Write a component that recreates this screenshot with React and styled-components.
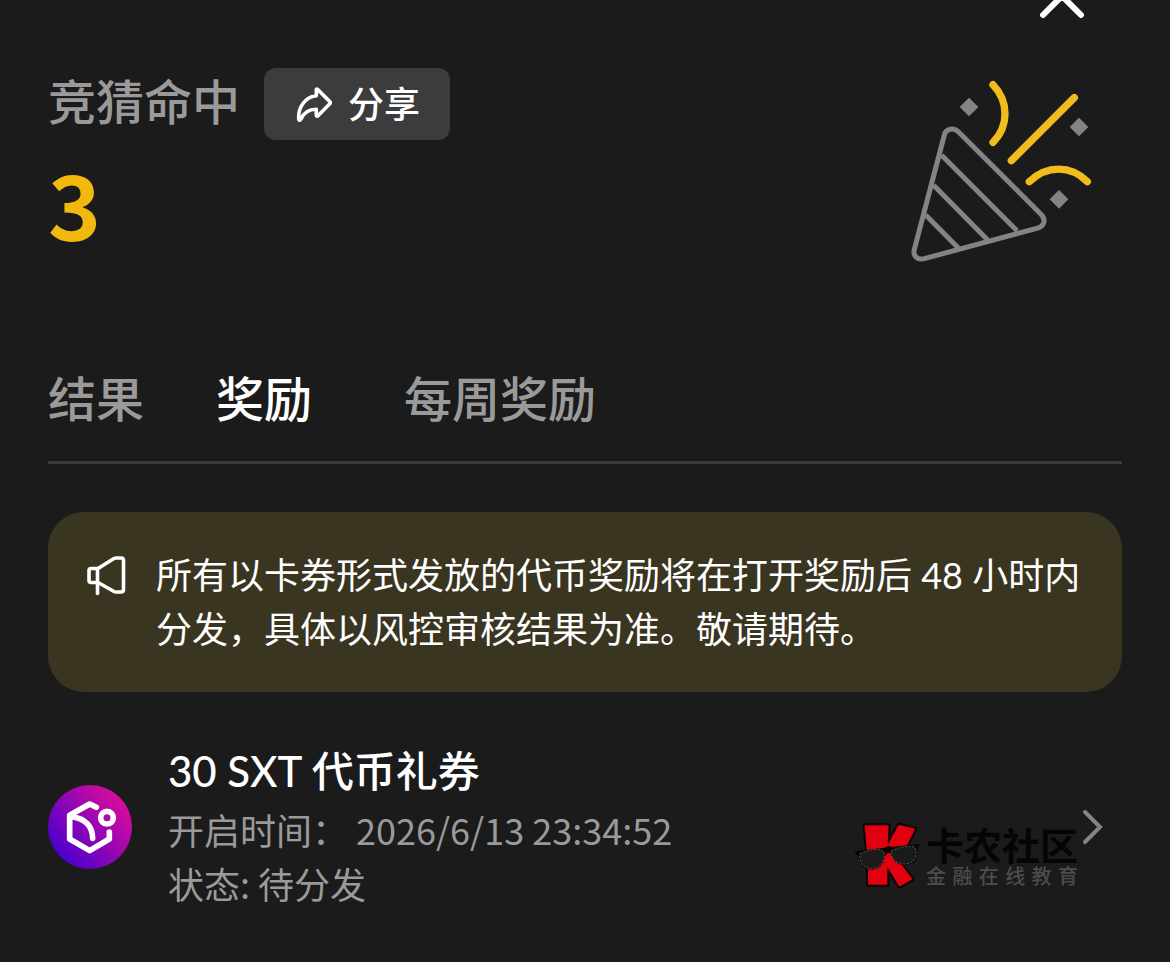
import { useState } from "react";
import styled, { createGlobalStyle } from "styled-components";

const GlobalStyle = createGlobalStyle`
  * {
    box-sizing: border-box;
  }
  body {
    margin: 0;
    background: #1b1b1b;
    color: #fff;
    font-family: Lato, "Noto Sans CJK SC", sans-serif;
  }
  button {
    font-family: inherit;
    border: none;
    background: none;
    padding: 0;
    cursor: pointer;
  }
  svg {
    display: block;
    flex-shrink: 0;
  }
`;

const Sheet = styled.main`
  overflow: hidden;
`;

// The close button is half scrolled out of the top of the sheet
const TopBar = styled.div`
  display: flex;
  justify-content: flex-end;
  align-items: flex-end;
  height: 20px;
  padding: 0 84px;
  overflow: hidden;
`;

const Body = styled.div`
  padding: 48px;
`;

const Hero = styled.section`
  display: flex;
  justify-content: space-between;
  align-items: flex-start;
  padding-right: 24px;
`;

const HeroTitle = styled.div`
  display: flex;
  align-items: flex-start;
  gap: 24px;
  height: 72px;
`;

const Heading = styled.h1`
  margin: 0;
  font-size: 48px;
  line-height: 68px;
  font-weight: 500;
  color: #9a9a9a;
`;

const ShareButton = styled.button`
  display: flex;
  align-items: center;
  gap: 16px;
  height: 72px;
  padding: 0 30px 0 32px;
  border-radius: 12px;
  background: #3c3c3c;
  color: #fff;
  font-size: 36px;
  line-height: 54px;
  font-weight: 500;
`;

const HitCount = styled.p`
  margin: 8px 0 0;
  font-family: "Noto Sans CJK SC", sans-serif;
  font-size: 90px;
  line-height: 108px;
  font-weight: 700;
  color: #f0b90b;
`;

const Tabs = styled.nav`
  display: flex;
  gap: 72px;
  margin-top: 96px;
  padding-bottom: 27px;
  border-bottom: 3px solid #3a3a3a;
`;

const Tab = styled.button`
  margin-right: ${({ $active }) => ($active ? "20px" : "0")};
  font-size: 48px;
  line-height: 70px;
  font-weight: 500;
  color: ${({ $active }) => ($active ? "#fff" : "#9a9a9a")};
`;

const Notice = styled.section`
  display: flex;
  gap: 28px;
  margin-top: 48px;
  padding: 36px;
  border-radius: 36px;
  background: #3a3520;
`;

const NoticeIcon = styled.div`
  padding-top: 6px;
`;

const NoticeText = styled.p`
  margin: 0;
  font-size: 36px;
  line-height: 54px;
`;

const Reward = styled.article`
  position: relative;
  display: flex;
  align-items: center;
  margin-top: 48px;
  padding-right: 18px;
`;

const RewardInfo = styled.div`
  flex: 1;
  margin-left: 36px;
  padding-bottom: 4px;
`;

const RewardTitle = styled.h2`
  margin: 0;
  font-size: 42px;
  line-height: 62px;
  font-weight: 500;
`;

const RewardMeta = styled.p`
  margin: 0;
  font-family: "Noto Sans CJK SC", sans-serif;
  font-size: 36px;
  line-height: 54px;
  color: #9a9a9a;
`;

const Watermark = styled.div`
  position: absolute;
  right: 44px;
  bottom: 24px;
  display: flex;
  align-items: center;
  gap: 6px;
  pointer-events: none;
`;

const WatermarkName = styled.div`
  font-size: 38px;
  line-height: 40px;
  font-weight: 700;
  color: #050505;
`;

const WatermarkTag = styled.div`
  display: flex;
  justify-content: space-between;
  font-size: 20px;
  line-height: 22px;
  font-weight: 500;
  color: #4c4c4c;
`;

const CloseIcon = () => (
  <svg width="48" height="48" viewBox="0 0 48 48" fill="none" stroke="#fff" strokeWidth="6" strokeLinecap="round">
    <path d="M5 5l38 38M43 5L5 43" />
  </svg>
);

const ShareIcon = () => (
  <svg width="36" height="36" viewBox="0 0 36 36" fill="none" stroke="#fff" strokeWidth="3.6" strokeLinejoin="round">
    <path d="M21.500 3.200L34.800 16.700L21.500 30.200Q20.300 30.500 20.300 29V23.300C13 23.200 8 26.500 5 33Q3.600 35.200 2.800 33.500C1.500 21.500 9.500 10.800 20.300 9.800V4Q20.500 2.600 21.500 3.200Z" />
  </svg>
);

const PopperIcon = () => (
  <svg width="200" height="200" viewBox="24 24 600 600" fill="none" strokeLinecap="round">
    <g stroke="#848484" strokeWidth="15" strokeLinejoin="round">
      <path d="M163 225C168 205 191 202 205 215L453 463C469 480 463 500 440 505L103 596C82 601 68 588 73 568Z" />
      <path d="M155 286L381 512M131 376L293 540M107 465L205 564" strokeLinecap="butt" />
    </g>
    <path d="M237 113l28 28-28 28-28-28zM567 173l28 28-28 28-28-28zM507 390l28 28-28 28-28-28z" fill="#848484" />
    <path d="M309 74C357 124 357 198 309 247M364 302L553 113M418 365C470 315 542 315 592 365" stroke="#f0bd1c" strokeWidth="22" />
  </svg>
);

const MegaphoneIcon = () => (
  <svg width="44" height="44" viewBox="0 0 44 44" fill="none" stroke="#fff" strokeWidth="3.6" strokeLinecap="round" strokeLinejoin="round">
    <path d="M14 14.500L30 4.500Q31 4 32 4H37Q39.500 4 39.500 6.500V35.500Q39.500 38 37 38H32Q31 38 30 37.500L14 28.500" />
    <path d="M13.500 14.500H7Q5 14.500 5 16.500V26.500Q5 28.500 7 28.500H13.500M13.500 14.500V39.500" />
  </svg>
);

const TokenIcon = () => (
  <svg width="84" height="84" viewBox="54 44 252 252" fill="none">
    <defs>
      <linearGradient id="token" x1="0.15" y1="0.85" x2="0.9" y2="0.2">
        <stop offset="0" stopColor="#4b00cc" />
        <stop offset="1" stopColor="#d80c9c" />
      </linearGradient>
    </defs>
    <circle cx="180" cy="170" r="126" fill="url(#token)" />
    <g stroke="#fff" strokeWidth="17" strokeLinecap="round" strokeLinejoin="round">
      <path d="M199 111L179 101L119 135V206L179 241L238 206V185" />
      <path d="M123 139C165 143 188 168 188 204" />
      <circle cx="231" cy="142" r="19" />
    </g>
  </svg>
);

const ChevronIcon = () => (
  <svg width="24" height="40" viewBox="0 0 24 40" fill="none" stroke="#848484" strokeWidth="4" strokeLinecap="round">
    <path d="M5 5l15 15L5 35" />
  </svg>
);

const MascotIcon = () => (
  <svg width="66" height="68" viewBox="38 70 198 204">
    <path
      d="M70 80H142L139 138L172 78L222 90L188 158L168 180L214 242L174 264L138 206V258H80V200Z"
      fill="#e00010"
      stroke="#080404"
      strokeWidth="12"
      strokeLinejoin="round"
      paintOrder="stroke"
    />
    <path
      d="M39 158L130 147Q140 138 150 145L234 136L229 154L225 184Q215 200 190 198Q160 198 152 174Q143 150 130 176Q124 208 98 212Q68 216 58 196L52 176Z"
      fill="#080404"
    />
    <g fill="#1b1b1b" stroke="#777" strokeWidth="2" strokeDasharray="7 4">
      <path d="M56 166Q86 148 122 154Q133 160 127 181Q119 207 94 209Q65 211 58 188Q54 176 56 166Z" />
      <path d="M149 158Q180 140 218 144Q227 150 223 174Q216 195 193 196Q162 196 152 176Z" />
    </g>
  </svg>
);

const TABS = ["结果", "奖励", "每周奖励"];

function App() {
  const [active, setActive] = useState("奖励");

  return (
    <Sheet>
      <GlobalStyle />
      <TopBar>
        <button type="button" aria-label="关闭">
          <CloseIcon />
        </button>
      </TopBar>
      <Body>
        <Hero>
          <div>
            <HeroTitle>
              <Heading>竞猜命中</Heading>
              <ShareButton type="button">
                <ShareIcon />
                分享
              </ShareButton>
            </HeroTitle>
            <HitCount>3</HitCount>
          </div>
          <PopperIcon />
        </Hero>

        <Tabs>
          {TABS.map((tab) => (
            <Tab key={tab} type="button" $active={tab === active} onClick={() => setActive(tab)}>
              {tab}
            </Tab>
          ))}
        </Tabs>

        <Notice>
          <NoticeIcon>
            <MegaphoneIcon />
          </NoticeIcon>
          <NoticeText>
            所有以卡券形式发放的代币奖励将在打开奖励后 48 小时内分发，具体以风控审核结果为准。敬请期待。
          </NoticeText>
        </Notice>

        <Reward>
          <TokenIcon />
          <RewardInfo>
            <RewardTitle>30 SXT 代币礼券</RewardTitle>
            <RewardMeta>开启时间： 2026/6/13 23:34:52</RewardMeta>
            <RewardMeta>状态: 待分发</RewardMeta>
          </RewardInfo>
          <ChevronIcon />
          <Watermark>
            <MascotIcon />
            <div>
              <WatermarkName>卡农社区</WatermarkName>
              <WatermarkTag>
                {[..."金融在线教育"].map((char) => (
                  <span key={char}>{char}</span>
                ))}
              </WatermarkTag>
            </div>
          </Watermark>
        </Reward>
      </Body>
    </Sheet>
  );
}

export default App;
